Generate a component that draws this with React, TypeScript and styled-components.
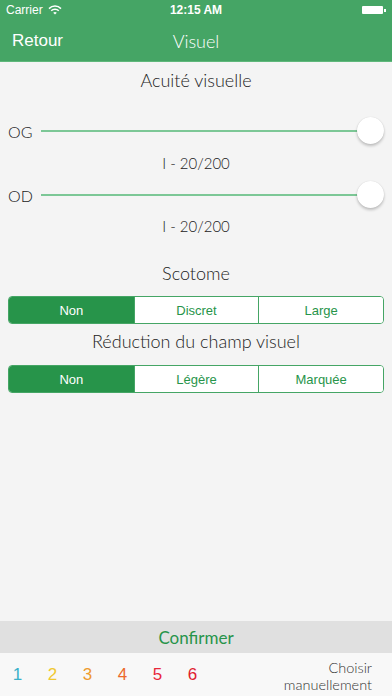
import React from "react";
import styled, { createGlobalStyle } from "styled-components";

const Global = createGlobalStyle`
  html, body { margin: 0; padding: 0; background: #f4f4f4; }
  * { box-sizing: border-box; }
`;

const GILL = `"Lato", "Open Sans", sans-serif`;
const HELV = `"Liberation Sans", Arial, sans-serif`;
const GREEN = "#45a565";
const DARK = "#27944a";

const Screen = styled.div`
  width: 392px;
  height: 696px;
  display: flex;
  flex-direction: column;
  background: #f4f4f4;
  overflow: hidden;
`;

const Header = styled.div`
  background: ${GREEN};
  border-bottom: 1px solid #5fb87b;
`;

const StatusBar = styled.div`
  height: 20px;
  display: grid;
  grid-template-columns: 1fr auto 1fr;
  align-items: center;
  padding: 0 6px 0 6px;
  color: #fff;
  font-family: ${HELV};
  font-size: 12px;
`;

const Carrier = styled.div`
  display: flex;
  align-items: center;
  gap: 5px;
`;

const Time = styled.div`
  font-weight: bold;
`;

const Battery = styled.div`
  justify-self: end;
  display: flex;
  align-items: center;
`;

const BatteryBody = styled.div`
  width: 21px;
  height: 8px;
  background: #fff;
  border-radius: 1px;
`;

const BatteryNub = styled.div`
  width: 2px;
  height: 3px;
  background: #fff;
  margin-left: 1px;
`;

const NavBar = styled.div`
  height: 41px;
  display: grid;
  grid-template-columns: 1fr auto 1fr;
  align-items: center;
  padding: 0 12px;
  color: #fff;
`;

const Back = styled.div`
  font-family: ${HELV};
  font-size: 17px;
`;

const Title = styled.div`
  font-family: ${GILL};
  font-weight: 300;
  font-size: 18px;
`;

const Content = styled.div`
  flex: 1;
  display: flex;
  flex-direction: column;
  padding: 0 8px;
`;

const SectionTitle = styled.div<{ $h: number; $mt?: number }>`
  height: ${(p) => p.$h}px;
  margin-top: ${(p) => p.$mt ?? 0}px;
  display: flex;
  align-items: center;
  justify-content: center;
  font-family: ${GILL};
  font-weight: 300;
  font-size: 18px;
  color: #222;
`;

const SliderRow = styled.div<{ $mt?: number }>`
  height: 34px;
  margin-top: ${(p) => p.$mt ?? 0}px;
  display: flex;
  align-items: center;
`;

const EyeLabel = styled.div`
  width: 33px;
  font-family: ${GILL};
  font-weight: 300;
  font-size: 16px;
  color: #222;
`;

const Track = styled.div`
  flex: 1;
  position: relative;
  height: 2px;
  background: #7cc796;
  margin-right: 13px;
`;

const Thumb = styled.div`
  position: absolute;
  right: -13px;
  top: 50%;
  width: 27px;
  height: 27px;
  margin-top: -14px;
  border-radius: 50%;
  background: #fff;
  box-shadow: 0 2px 3px rgba(0, 0, 0, 0.22), 0 0 1px rgba(0, 0, 0, 0.15);
`;

const Value = styled.div<{ $h: number }>`
  height: ${(p) => p.$h}px;
  display: flex;
  align-items: center;
  justify-content: center;
  font-family: ${GILL};
  font-weight: 300;
  font-size: 15px;
  color: #222;
`;

const Segmented = styled.div<{ $mt: number }>`
  margin-top: ${(p) => p.$mt}px;
  height: 28px;
  display: grid;
  grid-template-columns: repeat(3, 1fr);
  border: 1px solid ${GREEN};
  border-radius: 4px;
  overflow: hidden;
  background: #fff;
`;

const Segment = styled.div<{ $active?: boolean }>`
  display: flex;
  align-items: center;
  justify-content: center;
  font-family: ${HELV};
  font-size: 13px;
  color: ${(p) => (p.$active ? "#fff" : DARK)};
  background: ${(p) => (p.$active ? DARK : "#fff")};
  & + & {
    border-left: 1px solid ${GREEN};
  }
`;

const ConfirmBar = styled.div`
  height: 32px;
  background: #e0e0e0;
  display: flex;
  align-items: center;
  justify-content: center;
  font-family: ${GILL};
  font-weight: 400;
  font-size: 17px;
  color: ${DARK};
`;

const Footer = styled.div`
  height: 43px;
  background: #f8f8f8;
  display: flex;
  align-items: center;
  padding: 0 20px 0 0;
`;

const Numbers = styled.div`
  display: flex;
  flex: 1;
`;

const Num = styled.div<{ $c: string }>`
  width: 35px;
  text-align: center;
  font-family: ${HELV};
  font-size: 17px;
  color: ${(p) => p.$c};
`;

const Manual = styled.div`
  text-align: right;
  font-family: ${GILL};
  font-weight: 300;
  font-size: 14.5px;
  line-height: 17px;
  color: #333;
  margin-top: 2px;
`;

const Wifi = () => (
  <svg width="14" height="10" viewBox="0 0 14 10">
    <path d="M1 3.6 A8.5 8.5 0 0 1 13 3.6" stroke="#fff" strokeWidth="1.5" fill="none" />
    <path d="M3.2 5.8 A5.4 5.4 0 0 1 10.8 5.8" stroke="#fff" strokeWidth="1.5" fill="none" />
    <path d="M7 9.6 L5.2 7.8 A2.6 2.6 0 0 1 8.8 7.8 Z" fill="#fff" />
  </svg>
);

const Slider = ({ label, mt }: { label: string; mt?: number }) => (
  <SliderRow $mt={mt}>
    <EyeLabel>{label}</EyeLabel>
    <Track>
      <Thumb />
    </Track>
  </SliderRow>
);

const numbers = [
  ["1", "#3ab0c9"],
  ["2", "#f0c830"],
  ["3", "#ee9b2e"],
  ["4", "#ec6a2c"],
  ["5", "#e8273a"],
  ["6", "#e0202f"],
];

export default function App() {
  return (
    <Screen>
      <Global />
      <Header>
        <StatusBar>
          <Carrier>
            Carrier <Wifi />
          </Carrier>
          <Time>12:15 AM</Time>
          <Battery>
            <BatteryBody />
            <BatteryNub />
          </Battery>
        </StatusBar>
        <NavBar>
          <Back>Retour</Back>
          <Title>Visuel</Title>
          <div />
        </NavBar>
      </Header>
      <Content>
        <SectionTitle $h={36}>Acuité visuelle</SectionTitle>
        <Slider label="OG" mt={16} />
        <Value $h={30}>I - 20/200</Value>
        <Slider label="OD" />
        <Value $h={28}>I - 20/200</Value>
        <SectionTitle $h={34} $mt={16}>Scotome</SectionTitle>
        <Segmented $mt={6}>
          <Segment $active>Non</Segment>
          <Segment>Discret</Segment>
          <Segment>Large</Segment>
        </Segmented>
        <SectionTitle $h={34}>Réduction du champ visuel</SectionTitle>
        <Segmented $mt={7}>
          <Segment $active>Non</Segment>
          <Segment>Légère</Segment>
          <Segment>Marquée</Segment>
        </Segmented>
      </Content>
      <ConfirmBar>Confirmer</ConfirmBar>
      <Footer>
        <Numbers>
          {numbers.map(([n, c]) => (
            <Num key={n} $c={c}>
              {n}
            </Num>
          ))}
        </Numbers>
        <Manual>
          Choisir
          <br />
          manuellement
        </Manual>
      </Footer>
    </Screen>
  );
}
